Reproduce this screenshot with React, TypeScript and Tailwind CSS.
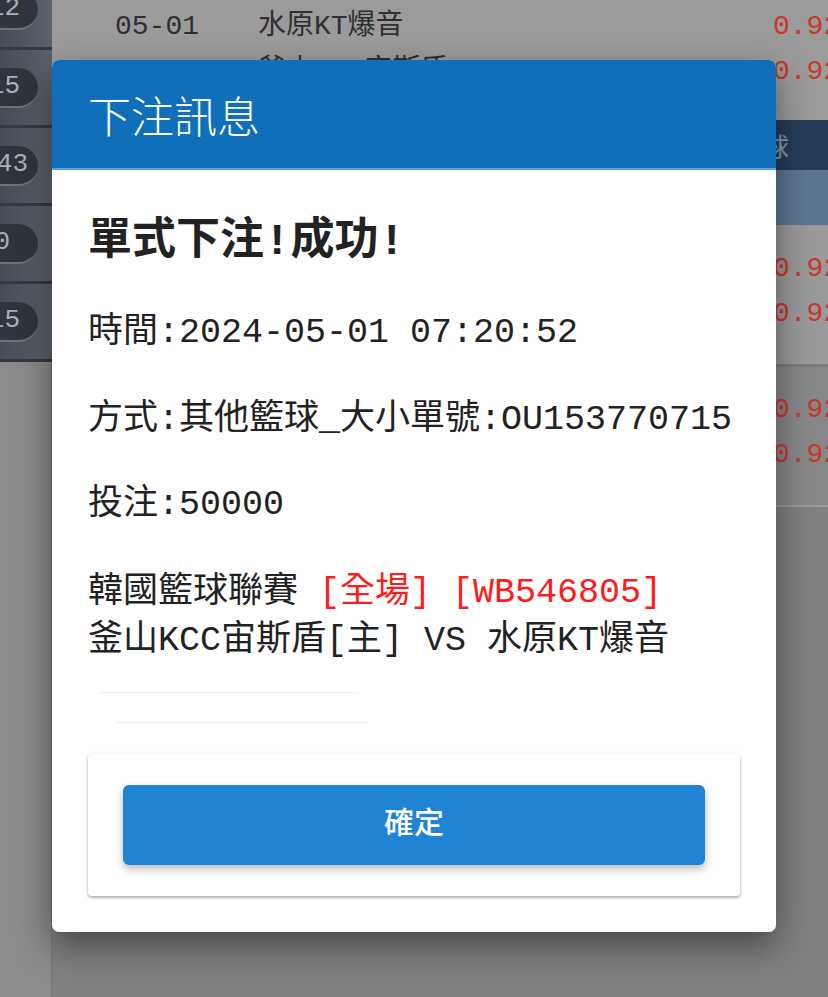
const mono = "font-['Liberation_Mono','Noto_Sans_CJK_TC',monospace]";
const sans = "font-['Noto_Sans_CJK_TC','Noto_Sans',sans-serif]";

const pills = [
  { text: '12', pad: 'pr-[18px]' },
  { text: '15', pad: 'pr-[18px]' },
  { text: '143', pad: 'pr-[10px]' },
  { text: '10', pad: 'pr-[28px]' },
  { text: '15', pad: 'pr-[18px]' },
];

function Sidebar() {
  return (
    <div className="w-[52px] shrink-0 flex flex-col">
      <div className="-mt-[28px] bg-linear-to-r from-[#444b54] to-[#5c636c]">
        {pills.map((p, i) => (
          <div key={i} className="h-[78px] border-b-[3px] border-[#343a41] flex items-center">
            <div
              className={`h-[40px] w-[80px] -ml-[42px] rounded-full bg-[#2e353d] border-b-2 border-[#6e7276] flex items-center justify-end ${p.pad} ${mono} text-[26px] text-[#a9afb6]`}
            >
              {p.text}
            </div>
          </div>
        ))}
      </div>
      <div className="flex-1 bg-[#8b8b8b] border-r border-[#777]" />
    </div>
  );
}

function Odds({ value }: { value: string }) {
  return <span className={`${mono} text-[28px] text-[#c9372c]`}>{value}</span>;
}

function Main() {
  return (
    <div className="flex-1 flex flex-col">
      <div className={`h-[120px] bg-[#9b9b9b] pl-[63px] pt-[4px] ${mono} text-[28px] leading-[45px] text-[#2f2f2f]`}>
        <div className="flex">
          <span className="w-[143px]">05-01</span>
          <span className="w-[515px]">水原KT爆音</span>
          <Odds value="0.92" />
        </div>
        <div className="flex">
          <span className="w-[143px]">19:00</span>
          <span className="w-[377px]">釜山KCC宙斯盾</span>
          <span className="w-[138px]">7.5</span>
          <Odds value="0.92" />
        </div>
      </div>
      <div className={`h-[50px] bg-[#263c58] flex items-center pl-[711px] ${sans} text-[26px] text-[#8d97a4]`}>球</div>
      <div className="h-[55px] bg-[#5c7592]" />
      <div className="h-[142px] bg-[#999999] border-b-[3px] border-[#7b7b7b] pl-[721px] pt-[21px] leading-[45px] flex flex-col">
        <Odds value="0.92" />
        <Odds value="0.92" />
      </div>
      <div className="h-[140px] bg-[#878787] border-b-2 border-[#9a9a9a] pl-[721px] pt-[20px] leading-[45px] flex flex-col">
        <Odds value="0.92" />
        <Odds value="0.92" />
      </div>
      <div className="flex-1 bg-[#808080]" />
    </div>
  );
}

function BetDialog() {
  return (
    <div className="absolute inset-0 flex justify-center pt-[60px]">
      <div className="w-[724px] h-fit rounded-[7px] bg-white overflow-hidden shadow-[0_14px_34px_rgba(0,0,0,0.45)]">
        <div className={`h-[110px] bg-[#0f6fbb] border-b-2 border-[#5aa2df] pl-[36px] pr-[38px] flex items-center ${sans} font-light text-[43px] text-white`}>
          下注訊息
        </div>
        <div className={`px-[36px] pt-[44px] pb-[36px] ${mono} text-[35px] leading-[48px] text-[#222]`}>
          <h2 className="text-[44px] leading-[56px] font-bold">單式下注!成功!</h2>
          <p className="mt-[39px]">時間:2024-05-01 07:20:52</p>
          <p className="mt-[39px] whitespace-nowrap">方式:其他籃球_大小單號:OU153770715</p>
          <p className="mt-[37px]">投注:50000</p>
          <p className="mt-[40px] whitespace-nowrap">
            韓國籃球聯賽 <span className="text-[#ff1b1b]">[全場] [WB546805]</span>
          </p>
          <p className="whitespace-nowrap">釜山KCC宙斯盾[主] VS 水原KT爆音</p>
          <div className="mt-[27px] ml-[10px] w-[261px] h-px bg-[#eeeeee]" />
          <div className="mt-[29px] ml-[28px] w-[252px] h-px bg-[#eeeeee]" />
          <div className="mt-[31px] rounded-[4px] bg-white px-[35px] py-[31px] shadow-[0_2px_3px_rgba(0,0,0,0.28),0_0_5px_rgba(0,0,0,0.08)]">
            <button className={`w-full h-[80px] pb-[10px] rounded-[6px] bg-[#2083d4] ${sans} font-medium text-[30px] text-white shadow-[0_4px_9px_rgba(0,0,0,0.28)]`}>
              確定
            </button>
          </div>
        </div>
      </div>
    </div>
  );
}

export default function App() {
  return (
    <div className="relative w-[828px] h-[997px] overflow-hidden bg-[#808080] flex">
      <Sidebar />
      <Main />
      <BetDialog />
    </div>
  );
}
